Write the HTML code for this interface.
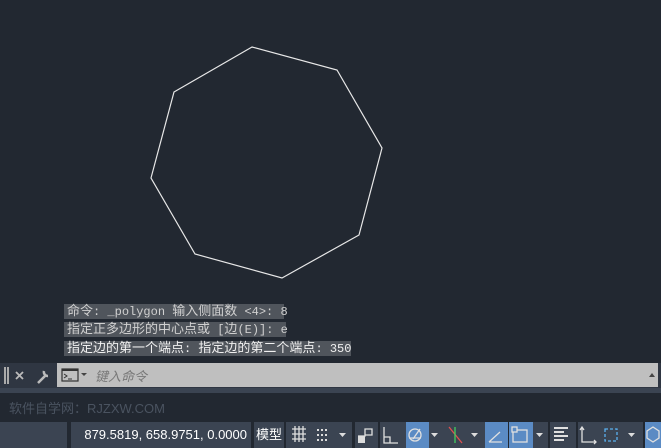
<!DOCTYPE html>
<html><head><meta charset="utf-8">
<style>
*{margin:0;padding:0;box-sizing:border-box}
body{width:661px;height:448px;background:#222831;position:relative;overflow:hidden;font-family:"Liberation Sans","Noto Sans CJK SC",sans-serif}
.h{position:absolute;left:64px;height:15px;background:#50555c;color:#d0d0d0;font:12px/15px "Liberation Mono","Noto Sans CJK SC",monospace;padding:0 3px;white-space:nowrap}
.h span{font-size:13px}
.c{position:absolute;top:422px;height:26px;background:#3b4452}
.b{background:#5b8bc4}
svg{position:absolute}
</style></head><body>
<svg width="661" height="300" style="left:0;top:0"><polygon points="252,47 337,70 382,148 359,235 282,278 195,254 151,178 174,92" fill="none" stroke="#e8e8e8" stroke-width="1.2"/></svg>
<div class="h" style="top:304px;width:220px"><span>命令</span>: _polygon <span>输入侧面数</span> &lt;4&gt;: 8</div>
<div class="h" style="top:322px;width:222px"><span>指定正多边形的中心点或</span> [<span>边</span>(E)]: e</div>
<div class="h" style="top:341px;width:287px;color:#f0f0f0"><span>指定边的第一个端点</span>: <span>指定边的第二个端点</span>: 350</div>
<div style="position:absolute;left:0;top:363px;width:661px;height:25px;background:#2f3642"></div>
<svg width="60" height="25" style="left:0;top:363px">
<g fill="#aaa"><rect x="4" y="4" width="2" height="17"/><rect x="7" y="4" width="2" height="17"/></g>
<path d="M16 9l7 7M23 9l-7 7" stroke="#bbb" stroke-width="1.8"/>
<path d="M38 20l7-7M44 8a4 4 0 0 0 4 5" stroke="#bbb" stroke-width="2.5" fill="none"/>
</svg>
<div style="position:absolute;left:57px;top:363px;width:601px;height:24px;background:#bfbfbf"></div>
<svg width="40" height="24" style="left:57px;top:363px"><rect x="5" y="6" width="16" height="12" fill="none" stroke="#333" stroke-width="1.2"/><rect x="5" y="6" width="16" height="2" fill="#333"/><path d="M7 11l3 2-3 2M11 16h4" stroke="#333" fill="none"/><path d="M24 10h6l-3 3z" fill="#444"/></svg>
<div style="position:absolute;left:95px;top:366px;font-size:13px;font-style:italic;color:#777">键入命令</div>
<svg width="8" height="6" style="left:649px;top:372px"><path d="M0 5h6l-3-4z" fill="#444"/></svg>
<div style="position:absolute;left:0;top:388px;width:661px;height:5px;background:#3b4452"></div>
<div style="position:absolute;left:9px;top:398px;font-size:13px;color:#4a5360">软件自学网：RJZXW.COM</div>
<div class="c" style="left:0;width:67px"></div>
<div class="c" style="left:71px;width:180px;color:#fff;font-size:13px;text-align:right;padding-right:4px;line-height:26px">879.5819, 658.9751, 0.0000</div>
<div class="c" style="left:254px;width:30px;color:#fff;font-size:13px;line-height:26px;text-align:center">模型</div>
<div class="c" style="left:286px;width:66px"></div>
<div class="c" style="left:355px;width:23px"></div>
<div class="c" style="left:380px;width:26px"></div>
<div class="c b" style="left:406px;width:23px"></div>
<div class="c" style="left:429px;width:56px"></div>
<div class="c b" style="left:485px;width:23px"></div>
<div class="c b" style="left:509px;width:24px"></div>
<div class="c" style="left:533px;width:15px"></div>
<div class="c" style="left:550px;width:26px"></div>
<div class="c" style="left:578px;width:65px"></div>
<div class="c b" style="left:645px;width:16px"></div>
<svg width="661" height="26" style="left:0;top:422px" fill="none" stroke="#e0e0e0" stroke-width="1.3">
<path d="M292 7h14M292 12h14M292 17h14M295 4v16M299 4v16M303 4v16"/>
<g fill="#ddd" stroke="none"><rect x="317" y="7" width="2" height="2"/><rect x="321" y="7" width="2" height="2"/><rect x="325" y="7" width="2" height="2"/><rect x="317" y="12" width="2" height="2"/><rect x="321" y="12" width="2" height="2"/><rect x="325" y="12" width="2" height="2"/><rect x="317" y="17" width="2" height="2"/><rect x="321" y="17" width="2" height="2"/><rect x="325" y="17" width="2" height="2"/>
<path d="M339 11h7l-3.5 4z M431 11h7l-3.5 4z M471 11h7l-3.5 4z M536 11h7l-3.5 4z M628 11h7l-3.5 4z"/>
<rect x="358" y="14" width="7" height="7"/></g>
<path d="M358 14h7v-7h7v6h-7"/>
<path d="M384 5v16h14M384 15h6v6"/>
<circle cx="415" cy="13" r="6"/><path d="M409 16h12M413 17l7-10"/>
<path d="M449 5l13 16" stroke="#e05050"/><path d="M455 5v16" stroke="#40d060"/>
<path d="M489 20h13M489 20l11-10"/>
<rect x="513" y="8" width="14" height="12"/><rect x="512" y="5" width="5" height="5" fill="#5b8bc4"/>
<path d="M554 6h14M554 10h10M554 14h14M554 18h10" stroke-width="2"/>
<path d="M582 5v15h14M580 8l2-3 2 3M594 18l2 2-2 2"/>
<rect x="605" y="7" width="12" height="12" stroke-dasharray="3 2" stroke="#5ab0f0"/>
<path d="M653 5l6 4v7l-6 4-6-4v-7z"/>
</svg>
</body></html>
